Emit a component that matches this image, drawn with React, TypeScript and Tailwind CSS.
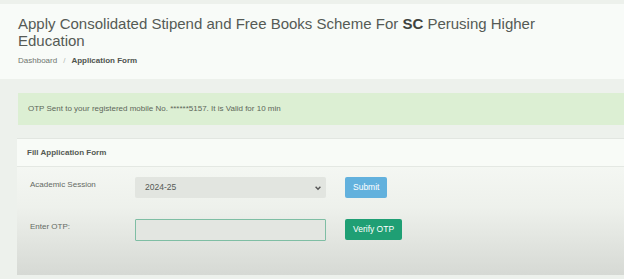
import React from 'react';

const font = { fontFamily: '"Liberation Sans", Arial, sans-serif' };

const Header: React.FC = () => (
    <div className="mt-[4px] bg-[#f8fbf8] pl-[18px] pr-4 pt-[11px] pb-[13px]">
        <h1 className="text-[15px] leading-[17px] text-[#555a55] font-normal">
            Apply Consolidated Stipend and Free Books Scheme For <b className="text-[#3e433e]">SC</b> Perusing Higher
            <br />
            Education
        </h1>
        <div className="mt-[7px] flex items-center text-[8px] leading-[10px]">
            <span className="text-[#6f756f]">Dashboard</span>
            <span className="mx-[6px] text-[#b5bab5]">/</span>
            <span className="font-bold text-[#4f544f]">Application Form</span>
        </div>
    </div>
);

const FormRow: React.FC<{ label: string; children: React.ReactNode }> = ({ label, children }) => (
    <div className="flex items-start">
        <div className="w-[105px] pt-[2px] text-[8px] text-[#646a64]">{label}</div>
        {children}
    </div>
);

export default function App() {
    return (
        <div style={font} className="w-[624px] h-[279px] overflow-hidden bg-[#edf1ec]">
            <Header />
            <div className="mt-[14px] ml-[18px] h-[32px] bg-[#dcefd3] flex items-center pl-[10px] text-[8px] text-[#5c675a]">
                OTP Sent to your registered mobile No. ******5157. It is Valid for 10 min
            </div>
            <div className="mt-[13px] ml-[17px] h-[137px] bg-linear-to-b from-[#f8fbf7] via-[#eef1ec] to-[#d6d9d4] border-t border-[#e2e6e1]">
                <div className="h-[28px] flex items-center pl-[10px] text-[8px] font-bold text-[#545a54] border-b border-[#e4e8e3] bg-[#f8fbf7]">
                    Fill Application Form
                </div>
                <div className="pl-[13px] pt-[10px] flex flex-col gap-[21px]">
                    <FormRow label="Academic Session">
                        <div className="w-[191px] h-[21px] bg-[#e2e5e0] rounded-[2px] flex items-center justify-between pl-[10px] pr-[4px] text-[8.5px] text-[#555a55]">
                            <span>2024-25</span>
                            <svg width="8" height="8" viewBox="0 0 10 10" fill="none" stroke="#555" strokeWidth="1.8">
                                <path d="M2 3.5 L5 6.5 L8 3.5" />
                            </svg>
                        </div>
                        <button className="ml-[19px] h-[21px] px-[8px] rounded-[2px] bg-[#62b1dd] text-white text-[8.5px]">
                            Submit
                        </button>
                    </FormRow>
                    <FormRow label="Enter OTP:">
                        <div className="w-[191px] h-[22px] border border-[#7fbea4] rounded-[1px] bg-[#e3e6e1]" />
                        <button className="ml-[19px] h-[21px] px-[8px] rounded-[2px] bg-[#1f9f74] text-white text-[8.5px]">
                            Verify OTP
                        </button>
                    </FormRow>
                </div>
            </div>
        </div>
    );
}
